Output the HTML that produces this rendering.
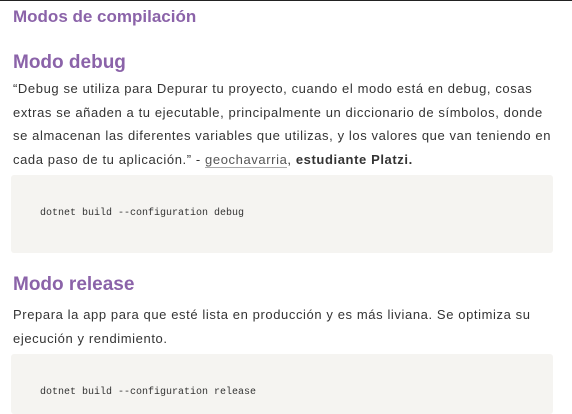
<!DOCTYPE html>
<html><head><meta charset="utf-8"><style>
body{margin:0;width:572px;height:405px;overflow:hidden;background:#fff;font-family:"Liberation Sans",sans-serif;position:relative;border-top:1px solid #222;box-sizing:border-box}
h{position:absolute;color:#8b63a9;font-weight:bold;white-space:nowrap}
.p{position:absolute;left:13px;font-size:13px;color:#333;white-space:nowrap;line-height:23.5px;letter-spacing:0.6px}
.c{position:absolute;left:11px;width:542px;background:#f5f4f1;border-radius:3px}
.m{position:absolute;left:40px;font-family:"Liberation Mono",monospace;font-size:10px;color:#333}
</style></head><body>
<h style="left:13px;top:6px;font-size:17px">Modos de compilación</h>
<h style="left:13px;top:51px;font-size:19px">Modo debug</h>
<div class="p" style="top:76px">“Debug se utiliza para Depurar tu proyecto, cuando el modo está en debug, cosas<br>extras se añaden a tu ejecutable, principalmente un diccionario de símbolos, donde<br>se almacenan las diferentes variables que utilizas, y los valores que van teniendo en<br>cada paso de tu aplicación.” - <span style="color:#555;border-bottom:1px solid #aaa">geochavarria</span>, <b>estudiante Platzi.</b></div>
<div class="c" style="top:174px;height:78px"></div>
<div class="m" style="top:207px">dotnet build --configuration debug</div>
<h style="left:13px;top:273px;font-size:19px">Modo release</h>
<div class="p" style="top:302px">Prepara la app para que esté lista en producción y es más liviana. Se optimiza su<br>ejecución y rendimiento.</div>
<div class="c" style="top:353px;height:60px"></div>
<div class="m" style="top:386px">dotnet build --configuration release</div>
</body></html>
